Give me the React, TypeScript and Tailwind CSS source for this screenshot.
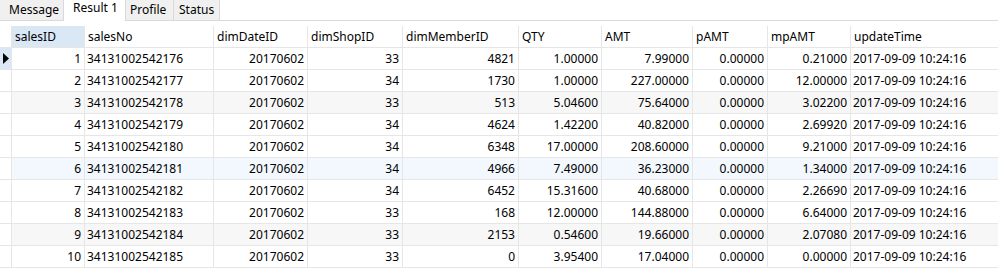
import React from 'react';

const columns = [
  { key: 'salesID', w: 'w-[73px]', align: 'right' },
  { key: 'salesNo', w: 'w-[129px]', align: 'left' },
  { key: 'dimDateID', w: 'w-[94px]', align: 'right' },
  { key: 'dimShopID', w: 'w-[95px]', align: 'right' },
  { key: 'dimMemberID', w: 'w-[116px]', align: 'right' },
  { key: 'QTY', w: 'w-[83px]', align: 'right' },
  { key: 'AMT', w: 'w-[91px]', align: 'right' },
  { key: 'pAMT', w: 'w-[75px]', align: 'right' },
  { key: 'mpAMT', w: 'w-[83px]', align: 'right' },
  { key: 'updateTime', w: 'flex-1', align: 'left' },
];

const rows: string[][] = [
  ['1', '34131002542176', '20170602', '33', '4821', '1.00000', '7.99000', '0.00000', '0.21000', '2017-09-09 10:24:16'],
  ['2', '34131002542177', '20170602', '34', '1730', '1.00000', '227.00000', '0.00000', '12.00000', '2017-09-09 10:24:16'],
  ['3', '34131002542178', '20170602', '33', '513', '5.04600', '75.64000', '0.00000', '3.02200', '2017-09-09 10:24:16'],
  ['4', '34131002542179', '20170602', '34', '4624', '1.42200', '40.82000', '0.00000', '2.69920', '2017-09-09 10:24:16'],
  ['5', '34131002542180', '20170602', '34', '6348', '17.00000', '208.60000', '0.00000', '9.21000', '2017-09-09 10:24:16'],
  ['6', '34131002542181', '20170602', '34', '4966', '7.49000', '36.23000', '0.00000', '1.34000', '2017-09-09 10:24:16'],
  ['7', '34131002542182', '20170602', '34', '6452', '15.31600', '40.68000', '0.00000', '2.26690', '2017-09-09 10:24:16'],
  ['8', '34131002542183', '20170602', '33', '168', '12.00000', '144.88000', '0.00000', '6.64000', '2017-09-09 10:24:16'],
  ['9', '34131002542184', '20170602', '33', '2153', '0.54600', '19.66000', '0.00000', '2.07080', '2017-09-09 10:24:16'],
  ['10', '34131002542185', '20170602', '33', '0', '3.95400', '17.04000', '0.00000', '0.00000', '2017-09-09 10:24:16'],
];

const rowBg = (i: number) => {
  if (i === 2 || i === 8) return 'bg-[#f7f7f7]';
  if (i === 5) return 'bg-[#f2f8fd]';
  return 'bg-white';
};

export default function App() {
  return (
    <div className="w-[998px] h-[272px] bg-white overflow-hidden text-[12px] text-black" style={{ fontFamily: '"Noto Sans", "Liberation Sans", sans-serif' }}>
      {/* Tabs */}
      <div className="flex h-[21px]">
        <div className="w-[64px] h-[21px] bg-[#f0f0f0] border-r border-b border-[#d9d9d9] pl-[9px] leading-[20px]">Message</div>
        <div className="w-[62px] h-[21px] bg-white border-r border-[#d9d9d9] pl-[9px] leading-[15px]">Result 1</div>
        <div className="w-[48px] h-[21px] bg-[#f0f0f0] border-r border-b border-[#d9d9d9] pl-[4px] leading-[20px]">Profile</div>
        <div className="w-[46px] h-[21px] bg-[#f0f0f0] border-r border-b border-[#d9d9d9] pl-[5px] leading-[20px]">Status</div>
        <div className="flex-1 h-[21px] border-b border-[#d9d9d9]" />
      </div>

      {/* Header */}
      <div className="flex h-[22px] mt-[5px] border-b border-[#e6e6e6]">
        <div className="w-[12px] border-r border-[#e6e6e6]" />
        {columns.map((c, i) => (
          <div
            key={c.key}
            className={`${c.w} flex items-center px-[3px] border-r border-[#e6e6e6] ${i === 0 ? 'bg-[#dae8f6]' : ''} ${i === columns.length - 1 ? 'border-r-0' : ''}`}
          >
            {c.key}
          </div>
        ))}
      </div>

      {/* Rows */}
      {rows.map((r, ri) => (
        <div key={ri} className={`flex h-[22px] border-b border-[#e6e6e6] ${rowBg(ri)}`}>
          <div className={`w-[12px] flex items-center border-r border-[#e6e6e6] ${ri === 0 ? 'bg-[#dae8f6]' : 'bg-white'}`}>
            {ri === 0 && (
              <svg width="7" height="11" viewBox="0 0 7 11" className="ml-[3px]">
                <polygon points="0,0 6,5.5 0,11" fill="#000" />
              </svg>
            )}
          </div>
          {columns.map((c, ci) => (
            <div
              key={c.key}
              className={`${c.w} flex items-center border-r border-[#e6e6e6] whitespace-nowrap ${c.align === 'right' ? 'justify-end pr-[3px] pl-[2px]' : 'justify-start pl-[2px]'} ${ci === columns.length - 1 ? 'border-r-0' : ''}`}
            >
              {r[ci]}
            </div>
          ))}
        </div>
      ))}
    </div>
  );
}
